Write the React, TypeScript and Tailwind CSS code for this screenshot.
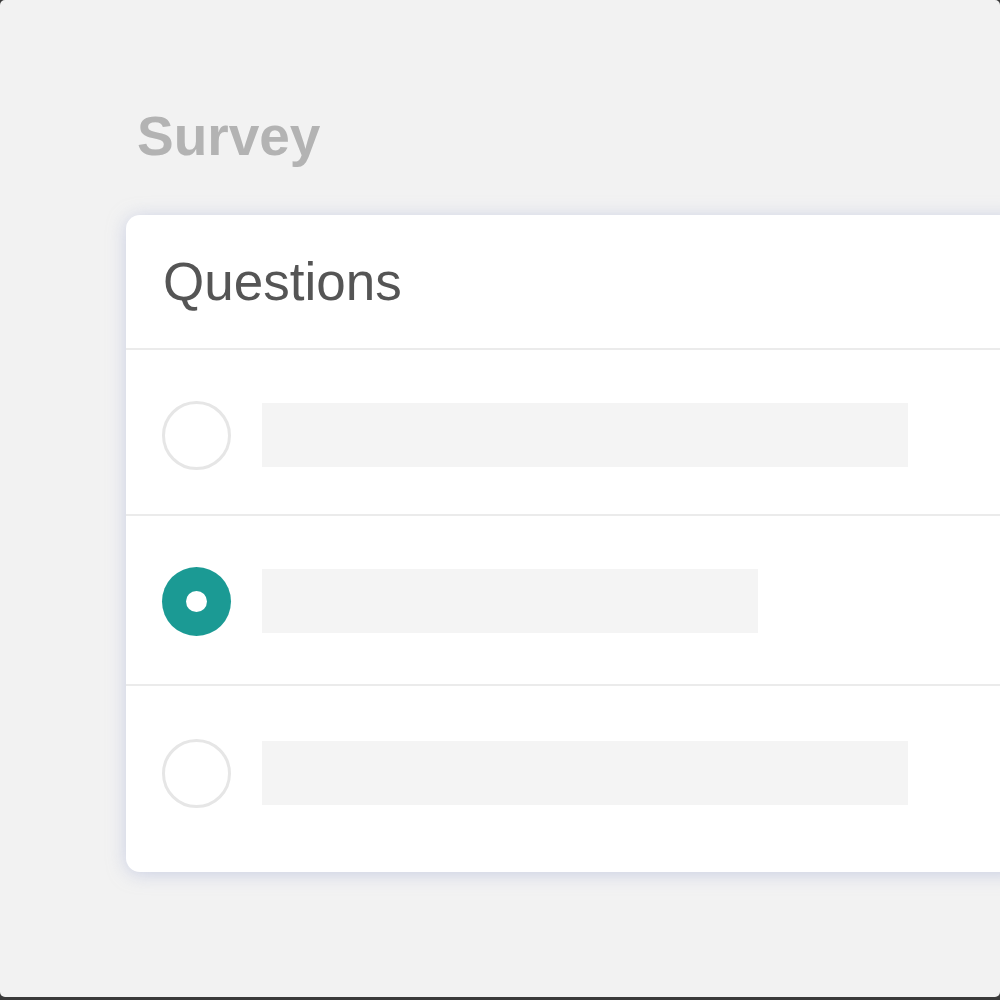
const rows = [
  { h: "h-[166px] pt-[6px]", bar: "w-[646px]", checked: false },
  { h: "h-[170px] pt-[2px]", bar: "w-[496px]", checked: true },
  { h: "h-[188px] pb-[12px]", bar: "w-[646px]", checked: false },
];

function Radio({ checked }: { checked: boolean }) {
  if (checked) {
    return (
      <div className="flex h-[69px] w-[69px] shrink-0 items-center justify-center rounded-full bg-[#1b9a94]">
        <div className="h-[21px] w-[21px] rounded-full bg-white" />
      </div>
    );
  }
  return <div className="h-[69px] w-[69px] shrink-0 rounded-full border-[3px] border-[#e6e6e6] bg-white" />;
}

export default function App() {
  return (
    <div className="h-[1000px] w-[1000px] overflow-hidden bg-[#3a3a3a]">
      <div
        className="h-[997px] w-full overflow-hidden rounded-[5px] bg-[#f2f2f2]"
        style={{ fontFamily: '"Liberation Sans", Arial, sans-serif' }}
      >
        {/* Title */}
        <h1 className="pl-[137px] pt-[109px] text-[55px] font-bold leading-none text-[#b3b3b3]">
          Survey
        </h1>

        {/* Card */}
        <div className="ml-[126px] mt-[51px] w-[900px] rounded-[14px] bg-white shadow-[0_2px_18px_rgba(170,178,215,0.55)]">
          <div className="flex h-[133px] items-center pl-[37px]">
            <span className="text-[53px] leading-none text-[#555555]">Questions</span>
          </div>
          {rows.map((r, i) => (
            <div key={i} className={`flex items-center gap-[31px] border-t-2 border-[#ebebeb] pl-[36px] ${r.h}`}>
              <Radio checked={r.checked} />
              <div className={`h-[64px] bg-[#f4f4f4] ${r.bar}`} />
            </div>
          ))}
        </div>
      </div>
    </div>
  );
}
